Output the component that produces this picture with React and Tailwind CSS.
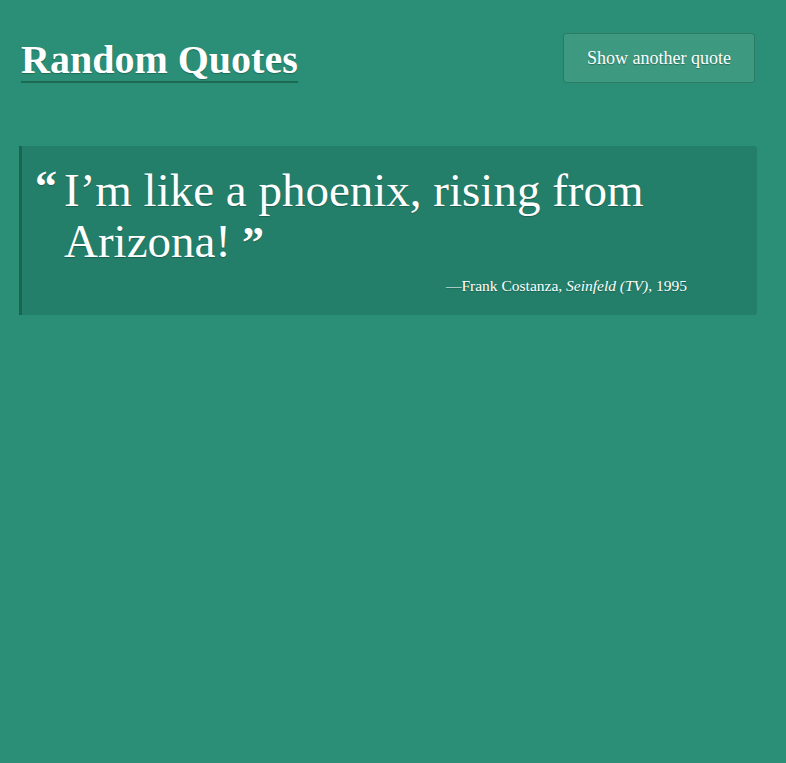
export default function App() {
  return (
    <div
      className="min-h-[763px] w-full bg-[#2a8f76] text-white"
      style={{ fontFamily: '"Liberation Serif", "Times New Roman", serif' }}
    >
      <header className="flex items-start justify-between pl-[21px] pr-[31px] pt-[33px]">
        <h1 className="mt-[5px] border-b-2 border-[#1c6a52] text-[40px] font-bold leading-[43px] [text-shadow:0_1px_1px_rgba(0,0,0,0.25)]">
          Random Quotes
        </h1>
        <button className="h-[50px] w-[192px] rounded-[3px] border border-[#2b7a62] bg-[#3d9a80] text-[18px] text-white [text-shadow:0_1px_1px_rgba(0,0,0,0.3)]">
          Show another quote
        </button>
      </header>

      <main className="pl-[19px] pr-[29px] pt-[63px]">
        <blockquote className="rounded-r-[3px] border-l-[3px] border-[#19664f] bg-[#237f6a] pb-[19px] pl-[13px] pr-[70px] pt-[19px]">
          <div className="flex">
            <span className="mr-[7px] text-[44px] font-bold leading-[44px] [text-shadow:0_1px_1px_rgba(0,0,0,0.25)]">
              &ldquo;
            </span>
            <p className="text-[47px] leading-[51px] [text-shadow:0_1px_1px_rgba(0,0,0,0.25)]">
              I&rsquo;m like a phoenix, rising from Arizona!
              <span className="ml-[11px] text-[44px] font-bold leading-[44px]">&rdquo;</span>
            </p>
          </div>
          <p className="mt-[9px] text-right text-[15.5px] leading-[20px] [text-shadow:0_1px_1px_rgba(0,0,0,0.25)]">
            &mdash;Frank Costanza, <i>Seinfeld (TV)</i>, 1995
          </p>
        </blockquote>
      </main>
    </div>
  );
}
